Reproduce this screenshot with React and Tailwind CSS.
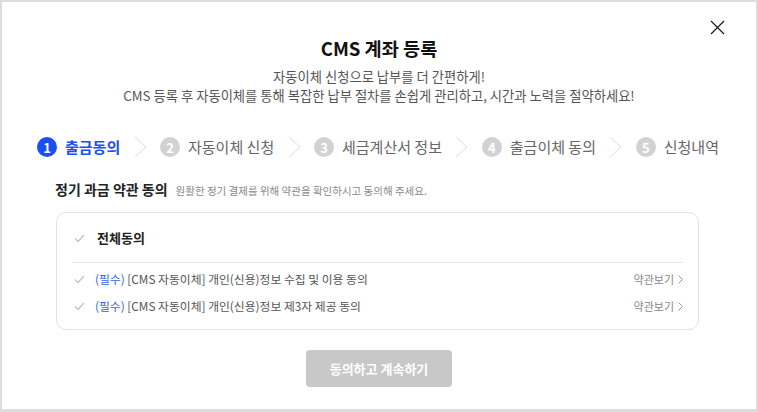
import React from "react";

const steps = ["출금동의", "자동이체 신청", "세금계산서 정보", "출금이체 동의", "신청내역"];

const terms = [
  "[CMS 자동이체] 개인(신용)정보 수집 및 이용 동의",
  "[CMS 자동이체] 개인(신용)정보 제3자 제공 동의",
];

function Check() {
  return (
    <svg width="11" height="9" viewBox="0 0 11 9" fill="none">
      <path d="M1 4.5 L4 7.5 L10 1" stroke="#c4c4c4" strokeWidth="1.3" />
    </svg>
  );
}

function Chevron() {
  return (
    <svg width="13" height="22" viewBox="0 0 13 22" fill="none">
      <path d="M1 1 L12 11 L1 21" stroke="#dcdcdc" strokeWidth="1" />
    </svg>
  );
}

export default function App() {
  return (
    <div
      className="w-[758px] h-[412px] bg-[#dcdcdc] pt-[2px] pl-[2px] pr-[2px] pb-[3px]"
      style={{ fontFamily: '"Noto Sans CJK KR", "Noto Sans", sans-serif' }}
    >
      <div className="relative h-full bg-white flex flex-col items-center pt-[33px]">
        {/* close */}
        <button className="absolute top-[18px] right-[31px] w-[15px] h-[15px]">
          <svg width="15" height="15" viewBox="0 0 15 15" fill="none">
            <path d="M1 1 L14 14 M14 1 L1 14" stroke="#111" strokeWidth="1.1" />
          </svg>
        </button>

        <h1 className="text-[18.6px] leading-[26px] font-bold text-[#111]">CMS 계좌 등록</h1>
        <p className="mt-[6px] text-[13.3px] leading-[19px] text-[#555] text-center">
          자동이체 신청으로 납부를 더 간편하게!
          <br />
          CMS 등록 후 자동이체를 통해 복잡한 납부 절차를 손쉽게 관리하고, 시간과 노력을 절약하세요!
        </p>

        {/* steps */}
        <div className="mt-[30px] w-full pl-[35px] pr-[37px] flex items-center justify-between h-[24px]">
          {steps.map((label, i) => (
            <React.Fragment key={label}>
              {i > 0 && <Chevron />}
              <div className="flex items-center gap-[8px]">
                <span
                  className={`w-[20px] h-[20px] rounded-full flex items-center justify-center text-white text-[13px] font-bold leading-none ${
                    i === 0 ? "bg-[#1a4ff5]" : "bg-[#d2d2d2]"
                  }`}
                >
                  {i + 1}
                </span>
                <span
                  className={`text-[15px] leading-[22px] ${
                    i === 0 ? "text-[#1a4ff5] font-bold" : "text-[#666]"
                  }`}
                >
                  {label}
                </span>
              </div>
            </React.Fragment>
          ))}
        </div>

        <div className="w-full px-[53px] mt-[20px]">
          <div className="flex items-baseline gap-[8px]">
            <h2 className="text-[14px] leading-[20px] font-bold text-[#222]">정기 과금 약관 동의</h2>
            <span className="text-[10.5px] text-[#888]">원활한 정기 결제를 위해 약관을 확인하시고 동의해 주세요.</span>
          </div>

          <div className="mt-[13px] ml-[1px] mr-[4px] border border-[#e3e3e3] rounded-[10px] px-[15px] pt-[15px] pb-[14px]">
            <div className="flex items-center gap-[12px] pl-[2px] pb-[14px] border-b border-[#e6e6e6]">
              <Check />
              <span className="text-[13px] leading-[20px] font-bold text-[#222]">전체동의</span>
            </div>
            <div className="flex flex-col gap-[9px] pt-[7px]">
              {terms.map((t) => (
                <div key={t} className="flex items-center justify-between pl-[2px] h-[18px]">
                  <div className="flex items-center gap-[10px]">
                    <Check />
                    <span className="text-[11.8px] text-[#555]">
                      <span className="text-[#2e63f0]">(필수)</span> {t}
                    </span>
                  </div>
                  <span className="text-[11px] text-[#888] flex items-center gap-[4px]">
                    약관보기
                    <svg width="5" height="9" viewBox="0 0 5 9" fill="none">
                      <path d="M0.5 0.5 L4.5 4.5 L0.5 8.5" stroke="#999" strokeWidth="1" />
                    </svg>
                  </span>
                </div>
              ))}
            </div>
          </div>
        </div>

        <button className="mt-[20px] w-[146px] h-[37px] rounded-[4px] bg-[#c8c8c8] text-white text-[13px] font-bold">
          동의하고 계속하기
        </button>
      </div>
    </div>
  );
}
